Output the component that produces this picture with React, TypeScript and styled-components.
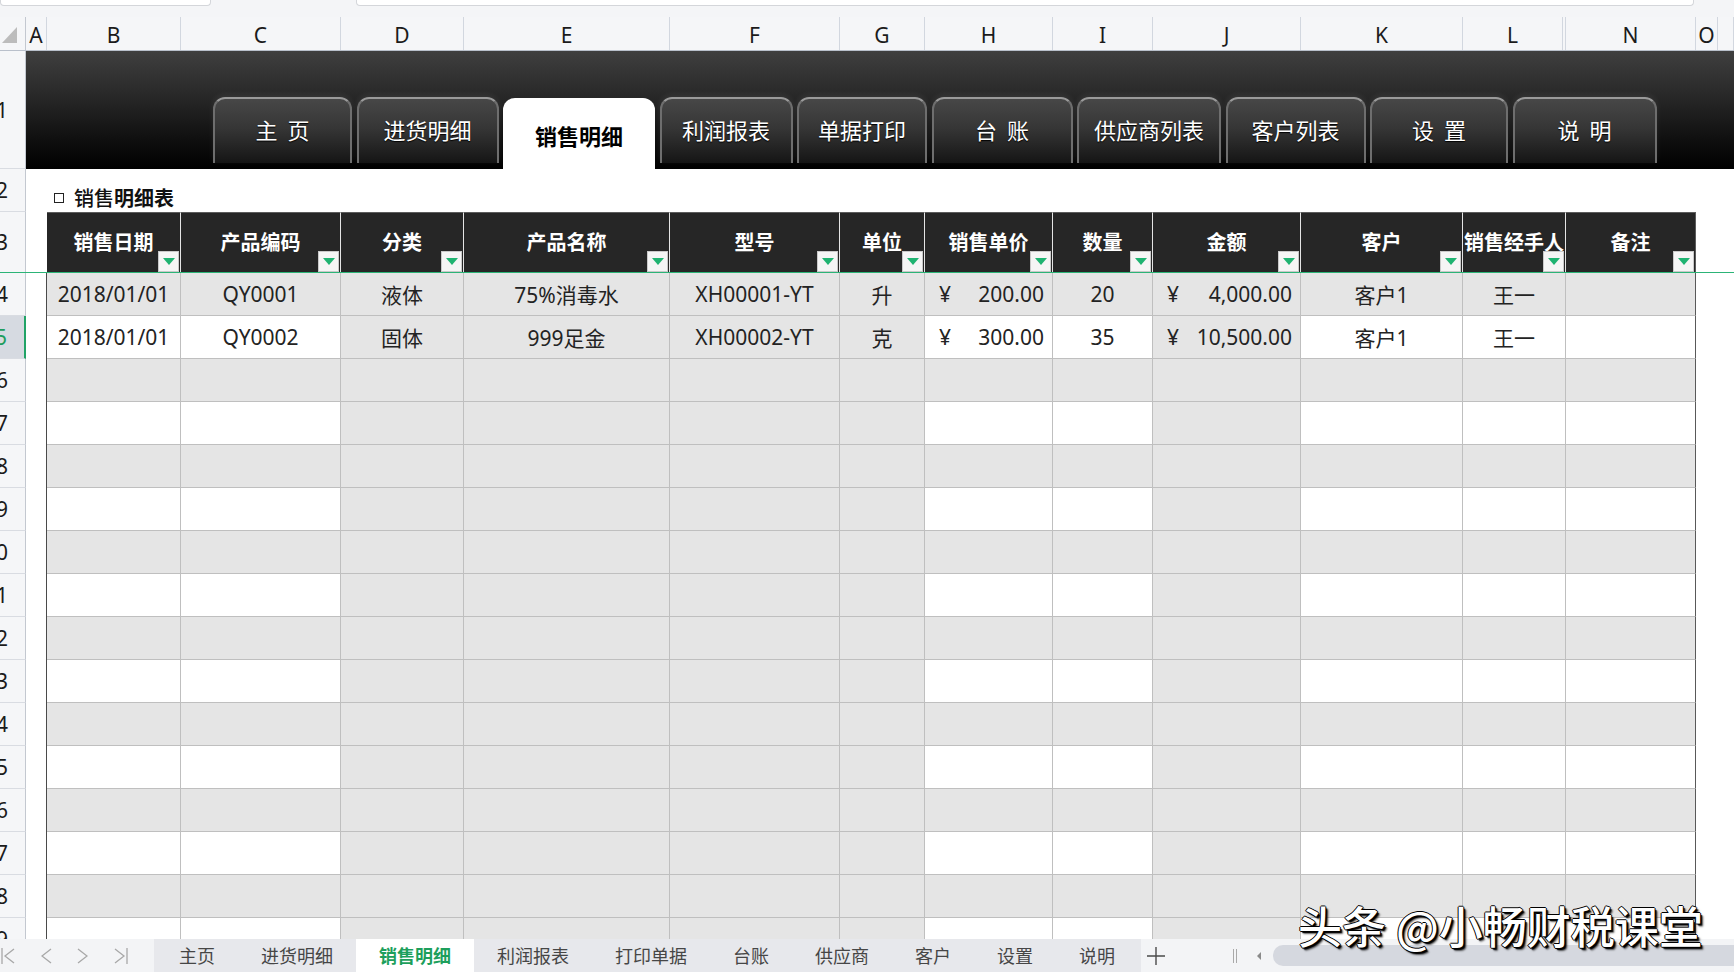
import React from 'react';
import styled, { createGlobalStyle } from 'styled-components';

const GlobalStyle = createGlobalStyle`
  html, body {
    margin: 0;
    padding: 0;
    background: #fff;
  }
  body {
    font-family: 'Noto Sans', 'Noto Sans CJK SC', sans-serif;
  }
  * {
    box-sizing: border-box;
  }
`;

// column grid of the sheet: row header, A..L, hidden M, N, O, P
const COLS = '26px 21px 134px 160px 123px 206px 170px 85px 128px 100px 148px 162px 100px 3px 130px 22px 1fr';
const LETTERS = ['A', 'B', 'C', 'D', 'E', 'F', 'G', 'H', 'I', 'J', 'K', 'L', '', 'N', 'O', ''];

const NAV_TABS = [
  { label: '主  页', w: 139 },
  { label: '进货明细', w: 142 },
  { label: '销售明细', w: 152, active: true },
  { label: '利润报表', w: 133 },
  { label: '单据打印', w: 130 },
  { label: '台  账', w: 141 },
  { label: '供应商列表', w: 144 },
  { label: '客户列表', w: 140 },
  { label: '设  置', w: 138 },
  { label: '说  明', w: 144 },
];

type Field = { title: string; stripe: boolean; money?: boolean; span?: number };

const FIELDS: Field[] = [
  { title: '销售日期', stripe: false },
  { title: '产品编码', stripe: false },
  { title: '分类', stripe: true },
  { title: '产品名称', stripe: true },
  { title: '型号', stripe: true },
  { title: '单位', stripe: true },
  { title: '销售单价', stripe: false, money: true },
  { title: '数量', stripe: false },
  { title: '金额', stripe: true, money: true },
  { title: '客户', stripe: false },
  { title: '销售经手人', stripe: false, span: 2 },
  { title: '备注', stripe: false },
];

const DATA: string[][] = [
  ['2018/01/01', 'QY0001', '液体', '75%消毒水', 'XH00001-YT', '升', '200.00', '20', '4,000.00', '客户1', '王一', ''],
  ['2018/01/01', 'QY0002', '固体', '999足金', 'XH00002-YT', '克', '300.00', '35', '10,500.00', '客户1', '王一', ''],
];

const SHEETS = ['主页', '进货明细', '销售明细', '利润报表', '打印单据', '台账', '供应商', '客户', '设置', '说明'];

const Page = styled.div`
  position: relative;
  width: 1734px;
  height: 972px;
  overflow: hidden;
  display: flex;
  flex-direction: column;
  background: #fff;
`;

const TopStrip = styled.div`
  height: 17px;
  flex: none;
  display: flex;
  align-items: flex-start;
  background: #f4f5f7;
`;

const InputBox = styled.div<{ $w: number; $ml?: number }>`
  width: ${(p) => p.$w}px;
  margin-left: ${(p) => p.$ml ?? 0}px;
  height: 6px;
  background: #fff;
  border: 1px solid #d4d6da;
  border-top: none;
  border-radius: 0 0 4px 4px;
`;

const ColHeader = styled.div`
  flex: none;
  height: 34px;
  display: grid;
  grid-template-columns: ${COLS};
  background: #f5f6f8;
  border-bottom: 1px solid #b9c0cb;
`;

const ColLetter = styled.div`
  display: flex;
  align-items: center;
  justify-content: center;
  padding-top: 3px;
  border-right: 1px solid #d2d7df;
  font-size: 21px;
  color: #1b1b1b;
`;

const Corner = styled.div`
  display: flex;
  align-items: flex-end;
  padding: 0 0 7px 2px;
  border-right: 1px solid #c3c8d0;
  &::before {
    content: '';
    border-left: 15px solid transparent;
    border-bottom: 16px solid #bcbcbc;
  }
`;

const Body = styled.div`
  flex: 1;
  overflow: hidden;
`;

const SheetRow = styled.div<{ $h: number; $green?: boolean }>`
  display: grid;
  grid-template-columns: ${COLS};
  height: ${(p) => p.$h}px;
  border-bottom: ${(p) => (p.$green ? '1px solid #2cb477' : 'none')};
`;

const RowNum = styled.div<{ $sel?: boolean; $open?: boolean }>`
  display: flex;
  align-items: center;
  justify-content: flex-end;
  padding-right: 17px;
  overflow: hidden;
  white-space: nowrap;
  font-size: 21px;
  color: ${(p) => (p.$sel ? '#1f9d5e' : '#1b1b1b')};
  background: ${(p) => (p.$sel ? '#d6dae1' : '#f5f6f8')};
  border-right: ${(p) => (p.$sel ? '2px solid #21a366' : '1px solid #c3c8d0')};
  border-bottom: ${(p) => (p.$open ? 'none' : '1px solid #d9dce2')};
`;

const Band = styled.div`
  grid-column: 2 / -1;
  display: flex;
  align-items: flex-end;
  gap: 4.5px;
  padding-left: 187px;
  background: linear-gradient(180deg, #3f3f3f 0%, #2a2a2a 35%, #0c0c0c 80%, #000 100%);
`;

const NavTab = styled.div<{ $w: number; $active?: boolean }>`
  width: ${(p) => p.$w}px;
  flex: none;
  display: flex;
  align-items: center;
  justify-content: center;
  font-family: 'Noto Sans CJK SC', sans-serif;
  font-size: 22px;
  white-space: pre;
  border-radius: 12px 12px 0 0;
  ${(p) =>
    p.$active
      ? `
    height: 71px;
    padding-top: 2px;
    background: #fff;
    color: #000;
    font-weight: 700;
  `
      : `
    height: 66px;
    margin-bottom: 6px;
    padding-bottom: 4px;
    color: #fff;
    text-shadow: 0 1px 1px #000;
    background: linear-gradient(180deg, #474747 0%, #363636 45%, #151515 100%);
    border: 2px solid;
    border-color: #9a9a9a #6e6e6e transparent #6e6e6e;
    border-bottom: none;
    box-shadow: 0 -2px 6px rgba(255, 255, 255, 0.08);
  `}
`;

const Blank = styled.div<{ $line?: boolean }>`
  background: #fff;
  border-right: ${(p) => (p.$line ? '1px solid #4a4a4a' : 'none')};
`;

const Title = styled.div`
  grid-column: 3 / -1;
  display: flex;
  align-items: flex-end;
  gap: 10px;
  padding-left: 7px;
  font-family: 'Noto Sans CJK SC', sans-serif;
  font-size: 20px;
  line-height: 28px;
  font-weight: 700;
  color: #111;
`;

const Box = styled.span`
  width: 10px;
  height: 10px;
  margin-bottom: 9px;
  border: 1px solid #222;
`;

const Light = styled.span`
  font-weight: 500;
`;

const HeadCell = styled.div<{ $span?: number; $last?: boolean }>`
  position: relative;
  grid-column: span ${(p) => p.$span ?? 1};
  display: flex;
  align-items: center;
  justify-content: center;
  padding-bottom: 2px;
  background: #262626;
  border-top: 1px solid #5c5c5c;
  border-right: 1px solid ${(p) => (p.$last ? '#5c5c5c' : '#e4e4e4')};
  color: #fff;
  font-family: 'Noto Sans CJK SC', sans-serif;
  font-size: 20px;
  font-weight: 700;
  white-space: nowrap;
`;

const FilterBtn = styled.span`
  position: absolute;
  right: 1px;
  bottom: 0;
  width: 21px;
  height: 21px;
  display: flex;
  align-items: center;
  justify-content: center;
  background: #f5f5f5;
  border: 1px solid #c9c9c9;
  &::after {
    content: '';
    border-left: 6px solid transparent;
    border-right: 6px solid transparent;
    border-top: 7px solid #1fb371;
  }
`;

const Cell = styled.div<{ $gray: boolean; $span?: number; $last?: boolean; $money?: boolean }>`
  grid-column: span ${(p) => p.$span ?? 1};
  display: flex;
  align-items: center;
  justify-content: ${(p) => (p.$money ? 'space-between' : 'center')};
  padding: ${(p) => (p.$money ? '0 8px 0 14px' : '0')};
  background: ${(p) => (p.$gray ? '#e5e5e5' : '#fff')};
  border-right: 1px solid ${(p) => (p.$last ? '#595959' : '#bfbfbf')};
  border-bottom: 1px solid #bfbfbf;
  font-family: 'Noto Sans', 'Noto Sans CJK SC', sans-serif;
  font-size: 21px;
  color: #232323;
  white-space: nowrap;
`;

const TabBar = styled.div`
  flex: none;
  height: 33px;
  display: flex;
  align-items: stretch;
  background: #f3f4f6;
  font-family: 'Noto Sans CJK SC', sans-serif;
`;

const NavArrows = styled.div`
  width: 154px;
  flex: none;
  display: flex;
  align-items: center;
  justify-content: space-between;
  padding: 0 26px 0 1px;
`;

const SheetTabs = styled.div`
  flex: none;
  display: flex;
  align-items: stretch;
  padding: 0 3px 0 2px;
  background: #e7e8ec;
`;

const SheetTab = styled.div<{ $active?: boolean }>`
  flex: none;
  display: flex;
  align-items: center;
  padding: 0 23px 2px;
  font-size: 18px;
  white-space: nowrap;
  color: ${(p) => (p.$active ? '#1d9f5c' : '#464646')};
  font-weight: ${(p) => (p.$active ? 700 : 400)};
  background: ${(p) => (p.$active ? '#fff' : 'transparent')};
`;

const AddBtn = styled.div`
  flex: none;
  width: 30px;
  display: flex;
  align-items: center;
  justify-content: center;
`;

const Splitter = styled.div`
  flex: none;
  margin-left: 62px;
  width: 24px;
  display: flex;
  align-items: center;
  justify-content: flex-start;
  gap: 2px;
  &::before,
  &::after {
    content: '';
    width: 1px;
    height: 14px;
    background: #a9a9a9;
  }
`;

const ScrollLeft = styled.div`
  flex: none;
  width: 16px;
  display: flex;
  align-items: center;
  &::before {
    content: '';
    border-top: 4px solid transparent;
    border-bottom: 4px solid transparent;
    border-right: 4px solid #8a8a8a;
  }
`;

const Thumb = styled.div`
  flex: 1;
  margin: 6px -20px 6px 0;
  border-radius: 10px;
  background: #d5d8df;
`;

const Watermark = styled.div`
  position: absolute;
  left: 1298px;
  top: 893px;
  font-family: 'Noto Sans CJK SC', sans-serif;
  font-size: 44px;
  font-weight: 500;
  color: #fff;
  white-space: nowrap;
  text-shadow: 1px 0 0 #000, -1px 0 0 #000, 0 1px 0 #000, 0 -1px 0 #000, 2px 2px 1px #000, 3px 3px 2px rgba(0, 0, 0, 0.6);
`;

function Chevron({ dir, bar }: { dir: 'l' | 'r'; bar?: boolean }) {
  const w = bar ? 14 : 11;
  const pts = dir === 'l' ? `${w - 1},1 ${bar ? 4 : 1},8 ${w - 1},15` : `1,1 ${w - (bar ? 4 : 1)},8 1,15`;
  return (
    <svg width={w} height={16} viewBox={`0 0 ${w} 16`}>
      <polyline points={pts} fill="none" stroke="#a8a8a8" strokeWidth="1.3" />
      {bar && <line x1={dir === 'l' ? 1 : w - 1} y1="0" x2={dir === 'l' ? 1 : w - 1} y2="16" stroke="#a8a8a8" strokeWidth="1.3" />}
    </svg>
  );
}

function DataRow({ n, values }: { n: number; values?: string[] }) {
  const fullGray = n % 2 === 0;
  return (
    <SheetRow $h={43}>
      <RowNum $sel={n === 5}>{n}</RowNum>
      <Blank $line />
      {FIELDS.map((f, i) => {
        const v = values ? values[i] : '';
        return (
          <Cell
            key={f.title}
            $gray={fullGray || f.stripe}
            $span={f.span}
            $last={i === FIELDS.length - 1}
            $money={f.money && !!v}
          >
            {f.money && v ? (
              <>
                <span>¥</span>
                <span>{v}</span>
              </>
            ) : (
              v
            )}
          </Cell>
        );
      })}
      <Blank />
      <Blank />
    </SheetRow>
  );
}

export default function App() {
  const rows = Array.from({ length: 16 }, (_, i) => i + 4);
  return (
    <Page>
      <GlobalStyle />
      <TopStrip>
        <InputBox $w={211} />
        <InputBox $w={1338} $ml={145} />
      </TopStrip>

      <ColHeader>
        <Corner />
        {LETTERS.map((l, i) => (
          <ColLetter key={i}>{l}</ColLetter>
        ))}
      </ColHeader>

      <Body>
        <SheetRow $h={118}>
          <RowNum>1</RowNum>
          <Band>
            {NAV_TABS.map((t) => (
              <NavTab key={t.label} $w={t.w} $active={t.active}>
                {t.label}
              </NavTab>
            ))}
          </Band>
        </SheetRow>

        <SheetRow $h={43}>
          <RowNum>2</RowNum>
          <Blank />
          <Title>
            <Box />
            <span>
              <Light>销售</Light>明细表
            </span>
          </Title>
        </SheetRow>

        <SheetRow $h={61} $green>
          <RowNum $open>3</RowNum>
          <Blank />
          {FIELDS.map((f, i) => (
            <HeadCell key={f.title} $span={f.span} $last={i === FIELDS.length - 1}>
              {f.title}
              <FilterBtn />
            </HeadCell>
          ))}
          <Blank />
          <Blank />
        </SheetRow>

        {rows.map((n) => (
          <DataRow key={n} n={n} values={DATA[n - 4]} />
        ))}
      </Body>

      <TabBar>
        <NavArrows>
          <Chevron dir="l" bar />
          <Chevron dir="l" />
          <Chevron dir="r" />
          <Chevron dir="r" bar />
        </NavArrows>
        <SheetTabs>
          {SHEETS.map((s) => (
            <SheetTab key={s} $active={s === '销售明细'}>
              {s}
            </SheetTab>
          ))}
        </SheetTabs>
        <AddBtn>
          <svg width="18" height="18" viewBox="0 0 18 18">
            <path d="M9 0v18M0 9h18" stroke="#4a4a4a" strokeWidth="1.4" fill="none" />
          </svg>
        </AddBtn>
        <Splitter />
        <ScrollLeft />
        <Thumb />
      </TabBar>

      <Watermark>头条 @小畅财税课堂</Watermark>
    </Page>
  );
}
